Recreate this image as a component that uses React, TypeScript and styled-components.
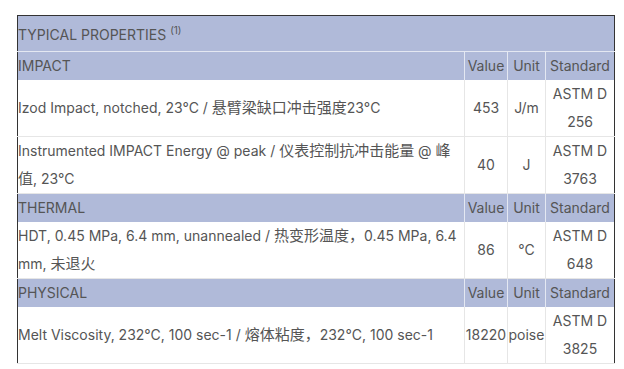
import React from "react";
import styled, { createGlobalStyle } from "styled-components";

const GlobalStyle = createGlobalStyle`
  body {
    margin: 0;
    background: #ffffff;
    font-family: "Inter", "Noto Sans CJK SC", sans-serif;
  }
`;

const Page = styled.div`
  padding: 15px 0 0 17px;
`;

const Table = styled.table`
  width: 598px;
  border-collapse: collapse;
  table-layout: fixed;
  border: 1px solid #333333;
  font-size: 14px;
  line-height: 28px;
  color: #555555;
`;

const TitleCell = styled.th`
  background: #b0bad9;
  text-align: left;
  font-weight: 400;
  height: 33px;
  padding: 2px 0 0;
  border-bottom: 1px solid #e4e8f2;
  vertical-align: middle;
  sup {
    font-size: 10px;
    line-height: 0;
    vertical-align: 6px;
  }
`;

const HeadCell = styled.th<{ $left?: boolean }>`
  background: #b0bad9;
  font-weight: 400;
  padding: 0;
  height: 28px;
  text-align: ${(p) => (p.$left ? "left" : "center")};
  border-left: ${(p) => (p.$left ? "none" : "1px solid #e4e8f2")};
  white-space: nowrap;
`;

const Cell = styled.td<{ $left?: boolean }>`
  padding: 0;
  text-align: ${(p) => (p.$left ? "left" : "center")};
  border-left: ${(p) => (p.$left ? "none" : "1px solid #e6e6e6")};
  border-bottom: 1px solid #e6e6e6;
  vertical-align: middle;
`;

// Chinese runs are set a touch larger, as in the source page
const Han = styled.span`
  font-family: "Noto Sans CJK SC", sans-serif;
  font-size: 15px;
  line-height: 1;
`;

const hanRun = /([\u3000-\u303f\u4e00-\u9fff\uff00-\uffef]+)/;

function Mixed({ text }: { text: string }) {
  return (
    <>
      {text.split(hanRun).map((part, i) =>
        i % 2 === 1 ? <Han key={i}>{part}</Han> : <React.Fragment key={i}>{part}</React.Fragment>
      )}
    </>
  );
}

type Row = { name: string; value: string; unit: string; std: string[] };
type Group = { title: string; rows: Row[] };

const groups: Group[] = [
  {
    title: "IMPACT",
    rows: [
      {
        name: "Izod Impact, notched, 23°C / 悬臂梁缺口冲击强度23°C",
        value: "453",
        unit: "J/m",
        std: ["ASTM D", "256"],
      },
      {
        name: "Instrumented IMPACT Energy @ peak / 仪表控制抗冲击能量 @ 峰值, 23°C",
        value: "40",
        unit: "J",
        std: ["ASTM D", "3763"],
      },
    ],
  },
  {
    title: "THERMAL",
    rows: [
      {
        name: "HDT, 0.45 MPa, 6.4 mm, unannealed / 热变形温度，0.45 MPa, 6.4 mm, 未退火",
        value: "86",
        unit: "°C",
        std: ["ASTM D", "648"],
      },
    ],
  },
  {
    title: "PHYSICAL",
    rows: [
      {
        name: "Melt Viscosity, 232°C, 100 sec-1 / 熔体粘度，232°C, 100 sec-1",
        value: "18220",
        unit: "poise",
        std: ["ASTM D", "3825"],
      },
    ],
  },
];

export default function App() {
  return (
    <Page>
      <GlobalStyle />
      <Table>
        <colgroup>
          <col />
          <col style={{ width: 43 }} />
          <col style={{ width: 38 }} />
          <col style={{ width: 69 }} />
        </colgroup>
        <tbody>
          <tr>
            <TitleCell colSpan={4}>
              TYPICAL PROPERTIES <sup>(1)</sup>
            </TitleCell>
          </tr>
          {groups.map((g) => (
            <React.Fragment key={g.title}>
              <tr>
                <HeadCell $left>{g.title}</HeadCell>
                <HeadCell>Value</HeadCell>
                <HeadCell>Unit</HeadCell>
                <HeadCell>Standard</HeadCell>
              </tr>
              {g.rows.map((r) => (
                <tr key={r.name}>
                  <Cell $left>
                    <Mixed text={r.name} />
                  </Cell>
                  <Cell>{r.value}</Cell>
                  <Cell>{r.unit}</Cell>
                  <Cell>
                    {r.std[0]}
                    <br />
                    {r.std[1]}
                  </Cell>
                </tr>
              ))}
            </React.Fragment>
          ))}
        </tbody>
      </Table>
    </Page>
  );
}
